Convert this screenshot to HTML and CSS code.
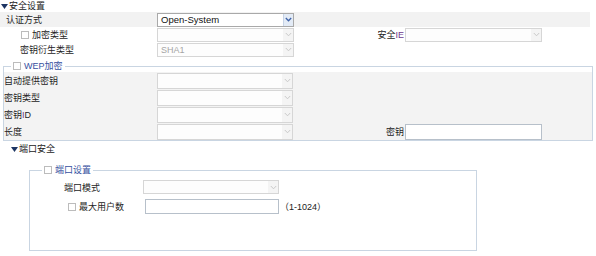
FILE: index.html
```html
<!DOCTYPE html>
<html lang="zh-CN">
<head>
    <meta charset="UTF-8">
    <title>安全设置</title>
    <link rel="stylesheet" href="styles.css">
</head>
<body>
    <!-- 安全设置 -->
    <div class="sec-title sec-main"><svg class="tri" width="7" height="5" viewBox="0 0 7 5"><polygon points="0,0 7,0 3.5,5" fill="#1d3563"/></svg>安全设置</div>
    <div class="grid1">
        <div class="row shade">
            <div class="lbl pl6">认证方式</div>
            <div class="sel on"><span class="val">Open-System</span><span class="arr"><svg width="7" height="5" viewBox="0 0 7 5"><polyline points="0.8,1 3.5,3.8 6.2,1" fill="none" stroke="#3f63a8" stroke-width="1.3"/></svg></span></div>
            <div></div><div></div><div></div>
        </div>
        <div class="row">
            <div class="lbl pl21"><span class="chk"></span>加密类型</div>
            <div class="sel dis"><span class="val"></span><span class="arr"><svg width="7" height="5" viewBox="0 0 7 5"><polyline points="0.8,1 3.5,3.8 6.2,1" fill="none" stroke="#c9c9c9" stroke-width="1"/></svg></span></div>
            <div class="lbl right">安全<span class="pur">IE</span></div>
            <div class="sel dis"><span class="val"></span><span class="arr"><svg width="7" height="5" viewBox="0 0 7 5"><polyline points="0.8,1 3.5,3.8 6.2,1" fill="none" stroke="#c9c9c9" stroke-width="1"/></svg></span></div>
            <div></div>
        </div>
        <div class="row">
            <div class="lbl pl20">密钥衍生类型</div>
            <div class="sel dis"><span class="val">SHA1</span><span class="arr"><svg width="7" height="5" viewBox="0 0 7 5"><polyline points="0.8,1 3.5,3.8 6.2,1" fill="none" stroke="#c9c9c9" stroke-width="1"/></svg></span></div>
            <div></div><div></div><div></div>
        </div>
    </div>

    <!-- WEP加密 -->
    <fieldset class="box wep">
        <legend><span class="chk"></span>WEP加密</legend>
        <div class="grid2">
            <div class="row">
                <div class="lbl">自动提供密钥</div>
                <div class="sel dis"><span class="val"></span><span class="arr"><svg width="7" height="5" viewBox="0 0 7 5"><polyline points="0.8,1 3.5,3.8 6.2,1" fill="none" stroke="#c9c9c9" stroke-width="1"/></svg></span></div>
                <div></div><div></div><div></div>
            </div>
            <div class="row">
                <div class="lbl">密钥类型</div>
                <div class="sel dis"><span class="val"></span><span class="arr"><svg width="7" height="5" viewBox="0 0 7 5"><polyline points="0.8,1 3.5,3.8 6.2,1" fill="none" stroke="#c9c9c9" stroke-width="1"/></svg></span></div>
                <div></div><div></div><div></div>
            </div>
            <div class="row">
                <div class="lbl">密钥<span class="pur">I</span>D</div>
                <div class="sel dis"><span class="val"></span><span class="arr"><svg width="7" height="5" viewBox="0 0 7 5"><polyline points="0.8,1 3.5,3.8 6.2,1" fill="none" stroke="#c9c9c9" stroke-width="1"/></svg></span></div>
                <div></div><div></div><div></div>
            </div>
            <div class="row">
                <div class="lbl">长度</div>
                <div class="sel dis"><span class="val"></span><span class="arr"><svg width="7" height="5" viewBox="0 0 7 5"><polyline points="0.8,1 3.5,3.8 6.2,1" fill="none" stroke="#c9c9c9" stroke-width="1"/></svg></span></div>
                <div class="lbl right">密钥</div>
                <div class="txt"></div>
                <div></div>
            </div>
        </div>
    </fieldset>

    <!-- 端口安全 -->
    <div class="sec-title sec-port"><svg class="tri" width="7" height="5" viewBox="0 0 7 5"><polygon points="0,0 7,0 3.5,5" fill="#1d3563"/></svg>端口安全</div>
    <fieldset class="box port">
        <legend><span class="chk"></span>端口设置</legend>
        <div class="grid3">
            <div class="row r1">
                <div class="lbl pl34">端口模式</div>
                <div class="sel dis"><span class="val"></span><span class="arr"><svg width="7" height="5" viewBox="0 0 7 5"><polyline points="0.8,1 3.5,3.8 6.2,1" fill="none" stroke="#c9c9c9" stroke-width="1"/></svg></span></div>
                <div></div>
            </div>
            <div class="row r2">
                <div class="lbl pl38"><span class="chk"></span>最大用户数</div>
                <div class="txt users"></div>
                <div class="hint">（1-1024）</div>
            </div>
        </div>
    </fieldset>
</body>
</html>
```

FILE: styles.css
```css
body {
    margin: 0;
    font-family: "Liberation Sans", "Noto Sans CJK SC", sans-serif;
    font-size: 9px;
    color: #242424;
    background-color: #fff;
}

/* section titles */
.sec-title {
    height: 11px;
    line-height: 11px;
    display: flex;
    align-items: center;
    color: #222;
}

.sec-main {
    margin-top: 1px;
    padding-left: 1px;
}

.sec-port {
    margin-top: 3px;
    padding-left: 11px;
}

.tri {
    margin-right: 1px;
    flex-shrink: 0;
}

/* rows */
.row {
    display: grid;
    align-items: center;
}

.grid1 {
    width: 590px;
}

.grid1 .row {
    height: 15px;
    grid-template-columns: 157px 137px 111px 137px 1fr;
}

.shade {
    background-color: #f2f2f2;
}

.lbl {
    display: flex;
    align-items: center;
    white-space: nowrap;
    height: 100%;
}

.right {
    justify-content: flex-end;
    padding-right: 1px;
}

.pl6 { padding-left: 6px; }
.pl20 { padding-left: 20px; }
.pl21 { padding-left: 21px; }
.pl34 { padding-left: 34px; }
.pl38 { padding-left: 38px; }

.pur {
    color: #6e3a8e;
}

/* checkbox */
.chk {
    display: inline-block;
    box-sizing: border-box;
    width: 8px;
    height: 8px;
    border: 1px solid #bcbcbc;
    background-color: #fff;
    margin-right: 3px;
}

/* select look */
.sel {
    box-sizing: border-box;
    height: 14px;
    display: flex;
    align-items: center;
    border: 1px solid #d6d6d6;
    background-color: #fdfdfd;
}

.sel .val {
    flex: 1;
    padding-left: 3px;
    line-height: 12px;
}

.sel .arr {
    width: 10px;
    height: 100%;
    display: flex;
    align-items: center;
    justify-content: center;
    box-sizing: border-box;
}

.sel.on {
    border-color: #a9a9a9;
    background-color: #fff;
    color: #111;
    font-size: 9.5px;
}

.sel.on .arr {
    background-color: #e3ebf6;
    border-left: 1px solid #c6d3e6;
}

.sel.dis {
    color: #a5a5a5;
}

.sel.dis .arr {
    background-color: #f4f4f4;
}

/* text input look */
.txt {
    box-sizing: border-box;
    height: 16px;
    border: 1px solid #b7c0ca;
    background-color: #fff;
}

/* fieldsets */
.box {
    margin: 0;
    padding: 0;
    min-width: 0;
    border: 1px solid #c9d5e2;
}

.box legend {
    padding: 0 2px;
    height: 10px;
    line-height: 10px;
    display: flex;
    align-items: center;
    color: #3650a0;
}

.wep {
    margin: 4px 0 0 3px;
    width: 590px;
    box-sizing: border-box;
}

.wep legend {
    margin-left: 7px;
}

.grid2 {
    margin-top: 1px;
    background-color: #f3f3f3;
}

.grid2 .row {
    height: 17px;
    grid-template-columns: 153px 136px 112px 137px 1fr;
}

.grid2 .sel {
    height: 16px;
}

.port {
    margin: 10px 0 0 29px;
    width: 448px;
    box-sizing: border-box;
    padding-bottom: 36px;
}

.port legend {
    margin-left: 12px;
}

.grid3 {
    padding-top: 5px;
}

.grid3 .row {
    grid-template-columns: 113px 136px 1fr;
}

.grid3 .r1 {
    height: 14px;
}

.grid3 .r2 {
    height: 15px;
    margin-top: 5px;
}

.users {
    height: 15px;
    margin-left: 2px;
}

.hint {
    padding-left: 1px;
    color: #222;
    white-space: nowrap;
}
```
